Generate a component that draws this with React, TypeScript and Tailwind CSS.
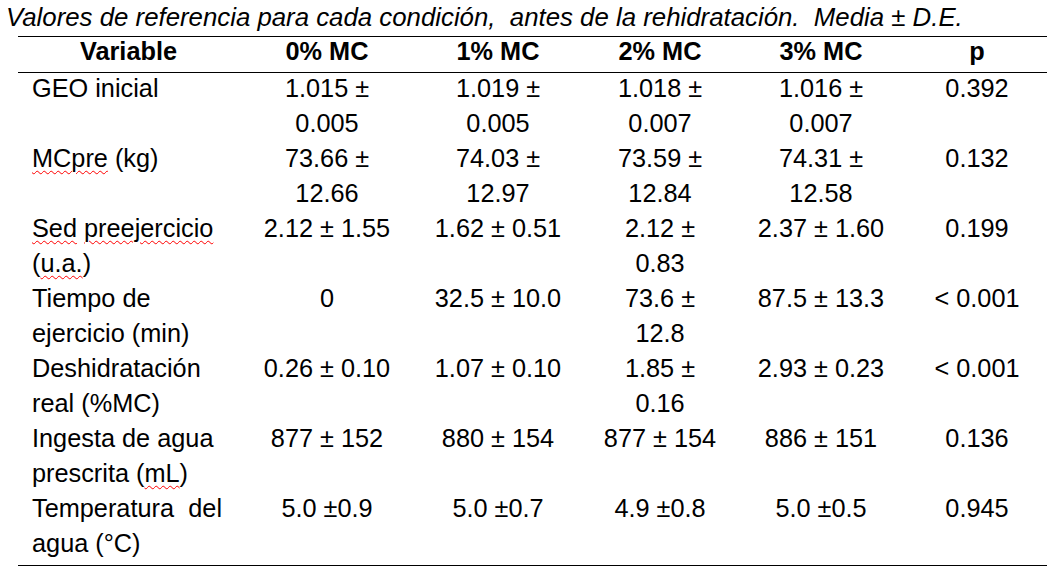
import React from 'react'

type Row = {
  variable: React.ReactNode[]
  cells: string[][]
  p: string
}

function Wavy({ children }: { children: React.ReactNode }) {
  return (
    <span className="underline decoration-wavy decoration-[#ff0000] decoration-1 underline-offset-[3px]">
      {children}
    </span>
  )
}

const rows: Row[] = [
  {
    variable: ['GEO inicial'],
    cells: [['1.015 ±', '0.005'], ['1.019 ±', '0.005'], ['1.018 ±', '0.007'], ['1.016 ±', '0.007']],
    p: '0.392',
  },
  {
    variable: [<><Wavy>MCpre</Wavy> (kg)</>],
    cells: [['73.66 ±', '12.66'], ['74.03 ±', '12.97'], ['73.59 ±', '12.84'], ['74.31 ±', '12.58']],
    p: '0.132',
  },
  {
    variable: [<><Wavy>Sed</Wavy> <Wavy>preejercicio</Wavy></>, <>(<Wavy>u.a.</Wavy>)</>],
    cells: [['2.12 ± 1.55'], ['1.62 ± 0.51'], ['2.12 ±', '0.83'], ['2.37 ± 1.60']],
    p: '0.199',
  },
  {
    variable: ['Tiempo de', 'ejercicio (min)'],
    cells: [['0'], ['32.5 ± 10.0'], ['73.6 ±', '12.8'], ['87.5 ± 13.3']],
    p: '< 0.001',
  },
  {
    variable: ['Deshidratación', 'real (%MC)'],
    cells: [['0.26 ± 0.10'], ['1.07 ± 0.10'], ['1.85 ±', '0.16'], ['2.93 ± 0.23']],
    p: '< 0.001',
  },
  {
    variable: ['Ingesta de agua', <>prescrita (<Wavy>mL</Wavy>)</>],
    cells: [['877 ± 152'], ['880 ± 154'], ['877 ± 154'], ['886 ± 151']],
    p: '0.136',
  },
  {
    variable: [
      <div className="w-[190px] text-justify [text-align-last:justify]">Temperatura del</div>,
      'agua (°C)',
    ],
    cells: [['5.0 ±0.9'], ['5.0 ±0.7'], ['4.9 ±0.8'], ['5.0 ±0.5']],
    p: '0.945',
  },
]

const headers = ['0% MC', '1% MC', '2% MC', '3% MC', 'p']

export default function App() {
  return (
    <div className="w-[1059px] h-[572px] bg-white text-black font-['Liberation_Sans',Arial,sans-serif] overflow-hidden">
      <div className="h-[36px] pl-[6px] italic text-[25.8px] leading-[35px] whitespace-pre">
        {'Valores de referencia para cada condición,  antes de la rehidratación.  Media ± D.E.'}
      </div>
      <table className="ml-[18px] w-[1029px] table-fixed border-collapse text-[25.3px]">
        <colgroup>
          <col className="w-[225px]" />
          <col className="w-[168px]" />
          <col className="w-[174px]" />
          <col className="w-[150px]" />
          <col className="w-[172px]" />
          <col className="w-[140px]" />
        </colgroup>
        <thead>
          <tr className="border-t border-b border-black">
            <th className="h-[35px] pr-[4px] pt-[2px] pb-[9px] align-top text-center font-bold leading-[24px]">Variable</th>
            {headers.map((h) => (
              <th key={h} className="h-[35px] pt-[2px] pb-[9px] align-top text-center font-bold leading-[24px] whitespace-nowrap">
                {h}
              </th>
            ))}
          </tr>
        </thead>
        <tbody className="border-b border-black">
          {rows.map((row, i) => {
            const shift = i === 0 ? '-mt-[2px]' : ''
            const last = i === rows.length - 1 ? 'pb-[4px]' : ''
            return (
              <tr key={i}>
                <td className={`pl-[14px] align-top leading-[35px] whitespace-nowrap ${last}`}>
                  <div className={shift}>
                    {row.variable.map((line, j) => (
                      <div key={j}>{line}</div>
                    ))}
                  </div>
                </td>
                {row.cells.map((cell, k) => (
                  <td key={k} className={`align-top text-center leading-[35px] whitespace-nowrap ${last}`}>
                    <div className={shift}>
                      {cell.map((line, j) => (
                        <div key={j}>{line}</div>
                      ))}
                    </div>
                  </td>
                ))}
                <td className={`align-top text-center leading-[35px] whitespace-nowrap ${last}`}>
                  <div className={shift}>{row.p}</div>
                </td>
              </tr>
            )
          })}
        </tbody>
      </table>
    </div>
  )
}
